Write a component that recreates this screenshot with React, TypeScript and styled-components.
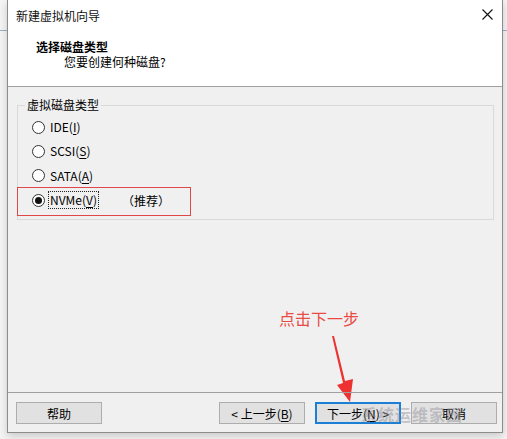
import * as React from 'react';
import styled, {createGlobalStyle} from 'styled-components';

const GlobalStyle = createGlobalStyle`
  html, body {
    margin: 0;
    padding: 0;
  }
  body {
    width: 507px;
    height: 439px;
    overflow: hidden;
    background:
      linear-gradient(to bottom, transparent 30px, #9eb0c6 30px, #9eb0c6 31px, transparent 31px),
      #f4f4f4;
    font-family: "Noto Sans CJK SC", "Microsoft YaHei", sans-serif;
    font-size: 12px;
    color: #000;
  }
`;

type Option = {
  key: string;
  label: string;
  hotkey: string;
  checked?: boolean;
  note?: string;
};

const options: Option[] = [
  {key: 'ide', label: 'IDE', hotkey: 'I'},
  {key: 'scsi', label: 'SCSI', hotkey: 'S'},
  {key: 'sata', label: 'SATA', hotkey: 'A'},
  {key: 'nvme', label: 'NVMe', hotkey: 'V', checked: true, note: '（推荐）'},
];

const CloseIcon = () => (
  <svg width="11" height="11" viewBox="0 0 11 11">
    <path d="M0.5 0.5 L10.5 10.5 M10.5 0.5 L0.5 10.5" stroke="#111" strokeWidth="1.1" />
  </svg>
);

const App = () => {
  return (
    <>
      <GlobalStyle />
      <Window>
        <TitleBar>
          <WindowTitle>新建虚拟机向导</WindowTitle>
          <CloseButton>
            <CloseIcon />
          </CloseButton>
        </TitleBar>
        <Header>
          <HeaderTitle>选择磁盘类型</HeaderTitle>
          <HeaderSub>您要创建何种磁盘?</HeaderSub>
        </Header>
        <Body>
          <Group>
            <Legend>虚拟磁盘类型</Legend>
            {options.map((o) => (
              <RadioRow key={o.key}>
                <Radio $checked={!!o.checked} />
                <RadioLabel $focused={!!o.checked}>
                  {o.label}(<u>{o.hotkey}</u>)
                </RadioLabel>
                {o.note && <Note>{o.note}</Note>}
              </RadioRow>
            ))}
          </Group>
          <Highlight />
          <Callout>点击下一步</Callout>
          <Arrow width="30" height="66" viewBox="0 0 30 66">
            <polygon points="2,0 4,0 15,45 23,43 20,66 7,49 13,47" fill="#ee3232" />
          </Arrow>
        </Body>
        <Footer>
          <Button>帮助</Button>
          <Spacer />
          <Button>
            &lt; 上一步(<u>B</u>)
          </Button>
          <Button $primary>
            下一步(<u>N</u>) &gt;
          </Button>
          <Button>取消</Button>
          <Watermark>系统运维家园</Watermark>
        </Footer>
      </Window>
    </>
  );
};

export default App;

const Window = styled.div`
  position: relative;
  margin-left: 7px;
  width: 494px;
  height: 432px;
  display: flex;
  flex-direction: column;
  background: #f0f0f0;
  border: 1px solid #8c8c8c;
  border-top: none;
  box-shadow: 0 3px 8px rgba(0, 0, 0, 0.18);
`;

const TitleBar = styled.div`
  height: 30px;
  display: flex;
  align-items: center;
  justify-content: space-between;
  background: #fff;
  padding: 0 9px 0 8px;
`;

const WindowTitle = styled.span`
  font-size: 12px;
  color: #111;
`;

const CloseButton = styled.span`
  display: flex;
  align-items: center;
  margin-top: -1px;
`;

const Header = styled.div`
  height: 57px;
  box-sizing: border-box;
  background: #fff;
  border-bottom: 1px solid #a0a0a0;
  padding: 9px 0 0 28px;
`;

const HeaderTitle = styled.div`
  font-weight: bold;
  font-size: 12px;
  line-height: 16px;
`;

const HeaderSub = styled.div`
  font-size: 12px;
  line-height: 16px;
  margin-top: -1px;
  padding-left: 28px;
`;

const Body = styled.div`
  position: relative;
  flex: 1;
  padding: 10px 8px 0 9px;
`;

const Group = styled.fieldset`
  margin: 0;
  padding: 2px 0 7px 7px;
  border: 1px solid #d9d9d9;
  min-width: 0;
`;

const Legend = styled.legend`
  margin-left: 0;
  padding: 0 2px;
  line-height: 16px;
  font-size: 12px;
`;

const RadioRow = styled.div`
  height: 24.3px;
  display: flex;
  align-items: center;
  padding-left: 7px;
`;

const Radio = styled.span<{$checked: boolean}>`
  width: 11px;
  height: 11px;
  border-radius: 50%;
  border: 1px solid #333;
  background: #fff;
  display: flex;
  align-items: center;
  justify-content: center;
  margin-right: 4px;
  &::after {
    content: '';
    width: 7px;
    height: 7px;
    border-radius: 50%;
    background: ${(p) => (p.$checked ? '#111' : 'transparent')};
  }
`;

const RadioLabel = styled.span<{$focused: boolean}>`
  line-height: 16px;
  padding: 0 1px;
  outline: ${(p) => (p.$focused ? '1px dotted #222' : 'none')};
  outline-offset: 0;
  u {
    text-underline-offset: 2px;
  }
`;

const Note = styled.span`
  margin-left: 24px;
`;

const Highlight = styled.div`
  position: absolute;
  left: 9px;
  top: 100px;
  width: 174px;
  height: 29px;
  border: 1.5px solid #e04848;
  box-sizing: border-box;
`;

const Callout = styled.div`
  position: absolute;
  left: 271px;
  top: 221px;
  font-size: 16px;
  line-height: 20px;
  color: #ea4a44;
`;

const Arrow = styled.svg`
  position: absolute;
  left: 322px;
  top: 249px;
`;

const Footer = styled.div`
  position: relative;
  height: 40px;
  box-sizing: border-box;
  border-top: 1px solid #a0a0a0;
  padding: 9px 5px 0 8px;
  display: flex;
  align-items: flex-start;
  gap: 10px;
`;

const Spacer = styled.div`
  flex: 1;
`;

const Button = styled.div<{$primary?: boolean}>`
  width: 86px;
  height: 22px;
  box-sizing: border-box;
  display: flex;
  align-items: center;
  justify-content: center;
  background: #e1e1e1;
  border: ${(p) => (p.$primary ? '2px solid #1c7fd6' : '1px solid #adadad')};
  font-size: 12px;
  white-space: pre;
  u {
    text-underline-offset: 2px;
  }
`;

const Watermark = styled.div`
  position: absolute;
  left: 353px;
  top: 9px;
  font-size: 16px;
  font-weight: bold;
  letter-spacing: 1px;
  color: rgba(140, 140, 150, 0.45);
  pointer-events: none;
`;
